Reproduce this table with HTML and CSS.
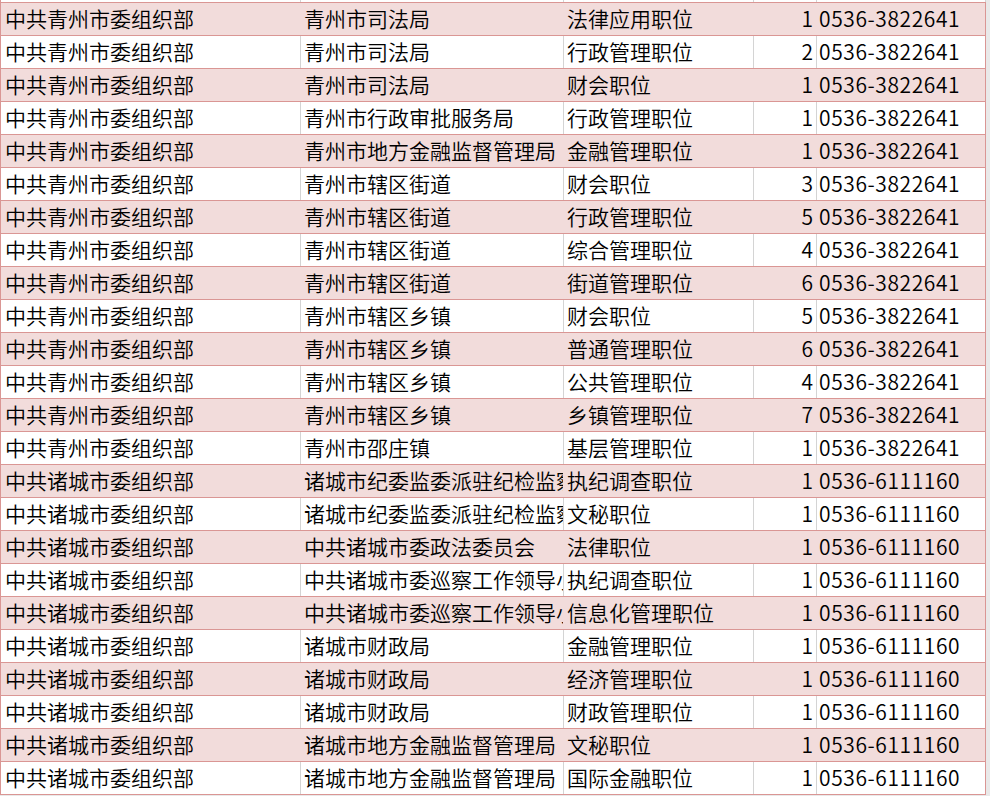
FILE: index.html
```html
<!DOCTYPE html>
<html lang="zh-CN">
<head>
<meta charset="utf-8">
<title>Sheet</title>
<link rel="stylesheet" href="styles.css">
</head>
<body>
<div class="sheet">
  <div class="row top"><div class="c c1"></div><div class="c c2"></div><div class="c c3"></div><div class="c c4"></div><div class="c c5"></div></div>
  <div class="row pink"><div class="c c1">中共青州市委组织部</div><div class="c c2">青州市司法局</div><div class="c c3">法律应用职位</div><div class="c c4">1</div><div class="c c5">0536-3822641</div></div>
  <div class="row"><div class="c c1">中共青州市委组织部</div><div class="c c2">青州市司法局</div><div class="c c3">行政管理职位</div><div class="c c4">2</div><div class="c c5">0536-3822641</div></div>
  <div class="row pink"><div class="c c1">中共青州市委组织部</div><div class="c c2">青州市司法局</div><div class="c c3">财会职位</div><div class="c c4">1</div><div class="c c5">0536-3822641</div></div>
  <div class="row"><div class="c c1">中共青州市委组织部</div><div class="c c2">青州市行政审批服务局</div><div class="c c3">行政管理职位</div><div class="c c4">1</div><div class="c c5">0536-3822641</div></div>
  <div class="row pink"><div class="c c1">中共青州市委组织部</div><div class="c c2">青州市地方金融监督管理局</div><div class="c c3">金融管理职位</div><div class="c c4">1</div><div class="c c5">0536-3822641</div></div>
  <div class="row"><div class="c c1">中共青州市委组织部</div><div class="c c2">青州市辖区街道</div><div class="c c3">财会职位</div><div class="c c4">3</div><div class="c c5">0536-3822641</div></div>
  <div class="row pink"><div class="c c1">中共青州市委组织部</div><div class="c c2">青州市辖区街道</div><div class="c c3">行政管理职位</div><div class="c c4">5</div><div class="c c5">0536-3822641</div></div>
  <div class="row"><div class="c c1">中共青州市委组织部</div><div class="c c2">青州市辖区街道</div><div class="c c3">综合管理职位</div><div class="c c4">4</div><div class="c c5">0536-3822641</div></div>
  <div class="row pink"><div class="c c1">中共青州市委组织部</div><div class="c c2">青州市辖区街道</div><div class="c c3">街道管理职位</div><div class="c c4">6</div><div class="c c5">0536-3822641</div></div>
  <div class="row"><div class="c c1">中共青州市委组织部</div><div class="c c2">青州市辖区乡镇</div><div class="c c3">财会职位</div><div class="c c4">5</div><div class="c c5">0536-3822641</div></div>
  <div class="row pink"><div class="c c1">中共青州市委组织部</div><div class="c c2">青州市辖区乡镇</div><div class="c c3">普通管理职位</div><div class="c c4">6</div><div class="c c5">0536-3822641</div></div>
  <div class="row"><div class="c c1">中共青州市委组织部</div><div class="c c2">青州市辖区乡镇</div><div class="c c3">公共管理职位</div><div class="c c4">4</div><div class="c c5">0536-3822641</div></div>
  <div class="row pink"><div class="c c1">中共青州市委组织部</div><div class="c c2">青州市辖区乡镇</div><div class="c c3">乡镇管理职位</div><div class="c c4">7</div><div class="c c5">0536-3822641</div></div>
  <div class="row"><div class="c c1">中共青州市委组织部</div><div class="c c2">青州市邵庄镇</div><div class="c c3">基层管理职位</div><div class="c c4">1</div><div class="c c5">0536-3822641</div></div>
  <div class="row pink"><div class="c c1">中共诸城市委组织部</div><div class="c c2">诸城市纪委监委派驻纪检监察组</div><div class="c c3">执纪调查职位</div><div class="c c4">1</div><div class="c c5">0536-6111160</div></div>
  <div class="row"><div class="c c1">中共诸城市委组织部</div><div class="c c2">诸城市纪委监委派驻纪检监察组</div><div class="c c3">文秘职位</div><div class="c c4">1</div><div class="c c5">0536-6111160</div></div>
  <div class="row pink"><div class="c c1">中共诸城市委组织部</div><div class="c c2">中共诸城市委政法委员会</div><div class="c c3">法律职位</div><div class="c c4">1</div><div class="c c5">0536-6111160</div></div>
  <div class="row"><div class="c c1">中共诸城市委组织部</div><div class="c c2">中共诸城市委巡察工作领导小组办公室</div><div class="c c3">执纪调查职位</div><div class="c c4">1</div><div class="c c5">0536-6111160</div></div>
  <div class="row pink"><div class="c c1">中共诸城市委组织部</div><div class="c c2">中共诸城市委巡察工作领导小组办公室</div><div class="c c3">信息化管理职位</div><div class="c c4">1</div><div class="c c5">0536-6111160</div></div>
  <div class="row"><div class="c c1">中共诸城市委组织部</div><div class="c c2">诸城市财政局</div><div class="c c3">金融管理职位</div><div class="c c4">1</div><div class="c c5">0536-6111160</div></div>
  <div class="row pink"><div class="c c1">中共诸城市委组织部</div><div class="c c2">诸城市财政局</div><div class="c c3">经济管理职位</div><div class="c c4">1</div><div class="c c5">0536-6111160</div></div>
  <div class="row"><div class="c c1">中共诸城市委组织部</div><div class="c c2">诸城市财政局</div><div class="c c3">财政管理职位</div><div class="c c4">1</div><div class="c c5">0536-6111160</div></div>
  <div class="row pink"><div class="c c1">中共诸城市委组织部</div><div class="c c2">诸城市地方金融监督管理局</div><div class="c c3">文秘职位</div><div class="c c4">1</div><div class="c c5">0536-6111160</div></div>
  <div class="row"><div class="c c1">中共诸城市委组织部</div><div class="c c2">诸城市地方金融监督管理局</div><div class="c c3">国际金融职位</div><div class="c c4">1</div><div class="c c5">0536-6111160</div></div>
</div>
</body>
</html>
```
FILE: styles.css
```css
html, body {
  margin: 0;
  padding: 0;
  background: #e9e9e9;
}
.sheet {
  width: 986px;
  font-family: "Noto Sans CJK SC", "Noto Sans", sans-serif;
  font-size: 21px;
  font-weight: 350;
  color: #000;
}
.row {
  display: flex;
  height: 33px;
  box-sizing: border-box;
  border-left: 1px solid #da9694;
  border-bottom: 1px solid #da9694;
  background: #fff;
}
.row.top {
  height: 3px;
}
.row.pink {
  background: #f2dcdb;
}
.c {
  box-sizing: border-box;
  height: 32px;
  line-height: 31px;
  white-space: nowrap;
  overflow: hidden;
  border-right: 1px solid #d4d4d4;
  padding-left: 3px;
}
.row.top .c {
  height: 2px;
}
.row.pink .c {
  border-right-color: transparent;
}
.c1 { width: 300px; padding-left: 4px; }
.c2 { width: 263px; }
.c3 { width: 190px; }
.c4 { width: 63px; text-align: right; padding-left: 0; padding-right: 3px; }
.c5 { width: 169px; padding-left: 2px; letter-spacing: 0.6px; }
.row .c5, .row.pink .c5 { border-right-color: #da9694; }
.row.top .c5 { border-right-color: #d4d4d4; }
```
